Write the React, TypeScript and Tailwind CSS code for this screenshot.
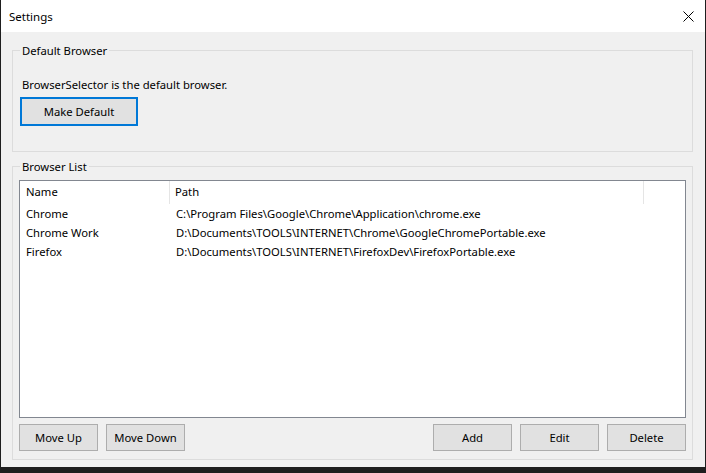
import React from "react";

const browsers = [
  { name: "Chrome", path: "C:\\Program Files\\Google\\Chrome\\Application\\chrome.exe" },
  { name: "Chrome Work", path: "D:\\Documents\\TOOLS\\INTERNET\\Chrome\\GoogleChromePortable.exe" },
  { name: "Firefox", path: "D:\\Documents\\TOOLS\\INTERNET\\FirefoxDev\\FirefoxPortable.exe" },
];

const WinButton: React.FC<{ label: string }> = ({ label }) => (
  <button className="h-[27px] w-[79px] bg-[#e1e1e1] border border-[#adadad] text-[11.25px] text-black leading-none">
    {label}
  </button>
);

const App: React.FC = () => {
  return (
    <div
      className="w-[706px] h-[473px] bg-[#1e1e1e] flex flex-col text-black text-[11.25px]"
      style={{ fontFamily: '"Noto Sans", "Liberation Sans", sans-serif' }}
    >
      <div className="flex-1 flex flex-col ml-px mr-px bg-[#f0f0f0] mb-[6px]">
        {/* Title bar */}
        <div className="h-[32px] bg-white flex items-center justify-between pl-[8px] pr-[11px] pt-[1px]">
          <span className="text-[11.5px]">Settings</span>
          <svg width="11" height="11" viewBox="0 0 11 11">
            <path d="M0.5 0.5 L10.5 10.5 M10.5 0.5 L0.5 10.5" stroke="#000" strokeWidth="1" fill="none" />
          </svg>
        </div>

        {/* Content */}
        <div className="flex-1 flex flex-col pt-[11px] pl-[11px] pr-[12px] pb-[7px] gap-[7px]">
          {/* Default Browser */}
          <fieldset className="border border-[#dcdcdc] px-[7px] pt-[19px] pb-[25px] m-0">
            <legend className="ml-0 px-[2px] leading-[15px]">Default Browser</legend>
            <p className="leading-[15px] mb-[5px] pl-[2px]">BrowserSelector is the default browser.</p>
            <button className="h-[29px] w-[118px] bg-[#e1e1e1] border-2 border-[#0078d7] text-[11.25px] leading-none">
              Make Default
            </button>
          </fieldset>

          {/* Browser List */}
          <fieldset className="flex-1 border border-[#dcdcdc] px-[6px] pt-[6px] pb-[8px] m-0 flex flex-col min-h-0">
            <legend className="ml-[1px] px-[2px] leading-[15px]">Browser List</legend>
            <div className="h-[238px] bg-white border border-[#828790] flex flex-col">
              <div className="flex h-[23px] items-center">
                <div className="w-[150px] pl-[6px] border-r border-[#e5e5e5] h-full flex items-center">Name</div>
                <div className="w-[474px] pl-[5px] border-r border-[#e5e5e5] h-full flex items-center">Path</div>
              </div>
              <div className="pt-[1px]">
                {browsers.map((b) => (
                  <div key={b.name} className="flex h-[19px] items-center">
                    <div className="w-[150px] pl-[6px]">{b.name}</div>
                    <div className="pl-[6px]">{b.path}</div>
                  </div>
                ))}
              </div>
            </div>
            <div className="flex mt-[6px] gap-[8px]">
              <WinButton label="Move Up" />
              <WinButton label="Move Down" />
              <div className="flex-1" />
              <WinButton label="Add" />
              <WinButton label="Edit" />
              <WinButton label="Delete" />
            </div>
          </fieldset>
        </div>
      </div>
    </div>
  );
};

export default App;
